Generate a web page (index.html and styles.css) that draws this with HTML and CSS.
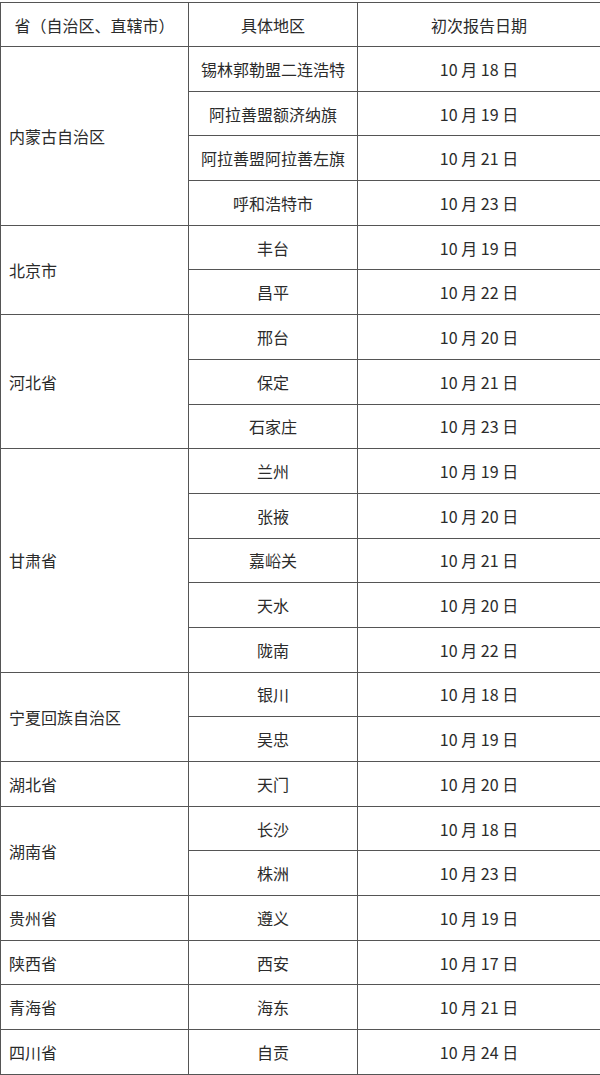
FILE: index.html
```html
<!DOCTYPE html>
<html lang="zh-CN">
<head>
<meta charset="utf-8">
<title>初次报告日期</title>
<link rel="stylesheet" href="styles.css">
</head>
<body>
<table class="report">
  <colgroup>
    <col class="c-prov">
    <col class="c-area">
    <col class="c-date">
  </colgroup>
  <thead>
    <tr class="head"><th class="prov-h">省（自治区、直辖市）</th><th>具体地区</th><th>初次报告日期</th></tr>
  </thead>
  <tbody>
    <tr><td class="prov" rowspan="4">内蒙古自治区</td><td>锡林郭勒盟二连浩特</td><td>10 月 18 日</td></tr>
    <tr><td>阿拉善盟额济纳旗</td><td>10 月 19 日</td></tr>
    <tr><td>阿拉善盟阿拉善左旗</td><td>10 月 21 日</td></tr>
    <tr><td>呼和浩特市</td><td>10 月 23 日</td></tr>
    <tr><td class="prov" rowspan="2">北京市</td><td>丰台</td><td>10 月 19 日</td></tr>
    <tr><td>昌平</td><td>10 月 22 日</td></tr>
    <tr><td class="prov" rowspan="3">河北省</td><td>邢台</td><td>10 月 20 日</td></tr>
    <tr><td>保定</td><td>10 月 21 日</td></tr>
    <tr><td>石家庄</td><td>10 月 23 日</td></tr>
    <tr><td class="prov" rowspan="5">甘肃省</td><td>兰州</td><td>10 月 19 日</td></tr>
    <tr><td>张掖</td><td>10 月 20 日</td></tr>
    <tr><td>嘉峪关</td><td>10 月 21 日</td></tr>
    <tr><td>天水</td><td>10 月 20 日</td></tr>
    <tr><td>陇南</td><td>10 月 22 日</td></tr>
    <tr><td class="prov" rowspan="2">宁夏回族自治区</td><td>银川</td><td>10 月 18 日</td></tr>
    <tr><td>吴忠</td><td>10 月 19 日</td></tr>
    <tr><td class="prov">湖北省</td><td>天门</td><td>10 月 20 日</td></tr>
    <tr><td class="prov" rowspan="2">湖南省</td><td>长沙</td><td>10 月 18 日</td></tr>
    <tr><td>株洲</td><td>10 月 23 日</td></tr>
    <tr><td class="prov">贵州省</td><td>遵义</td><td>10 月 19 日</td></tr>
    <tr><td class="prov">陕西省</td><td>西安</td><td>10 月 17 日</td></tr>
    <tr><td class="prov">青海省</td><td>海东</td><td>10 月 21 日</td></tr>
    <tr><td class="prov">四川省</td><td>自贡</td><td>10 月 24 日</td></tr>
  </tbody>
</table>
</body>
</html>
```

FILE: styles.css
```css
html, body {
  margin: 0;
  padding: 0;
  background: #ffffff;
}

body {
  padding-top: 2px;
  font-family: "Noto Sans CJK SC", "Noto Sans", sans-serif;
  font-size: 16px;
  color: #2b2b2b;
}

.report {
  width: 600px;
  border-collapse: collapse;
  table-layout: fixed;
}

.c-prov { width: 188px; }
.c-area { width: 169px; }
.c-date { width: 243px; }

.report th,
.report td {
  border: 1px solid #555555;
  height: 44.7px;
  padding: 0;
  text-align: center;
  vertical-align: middle;
  font-weight: normal;
  line-height: 20px;
  box-sizing: border-box;
}

.report .head th {
  height: 44px;
}

.report td.prov {
  text-align: left;
  padding-left: 8px;
}

.num {
  letter-spacing: 0;
}
```
